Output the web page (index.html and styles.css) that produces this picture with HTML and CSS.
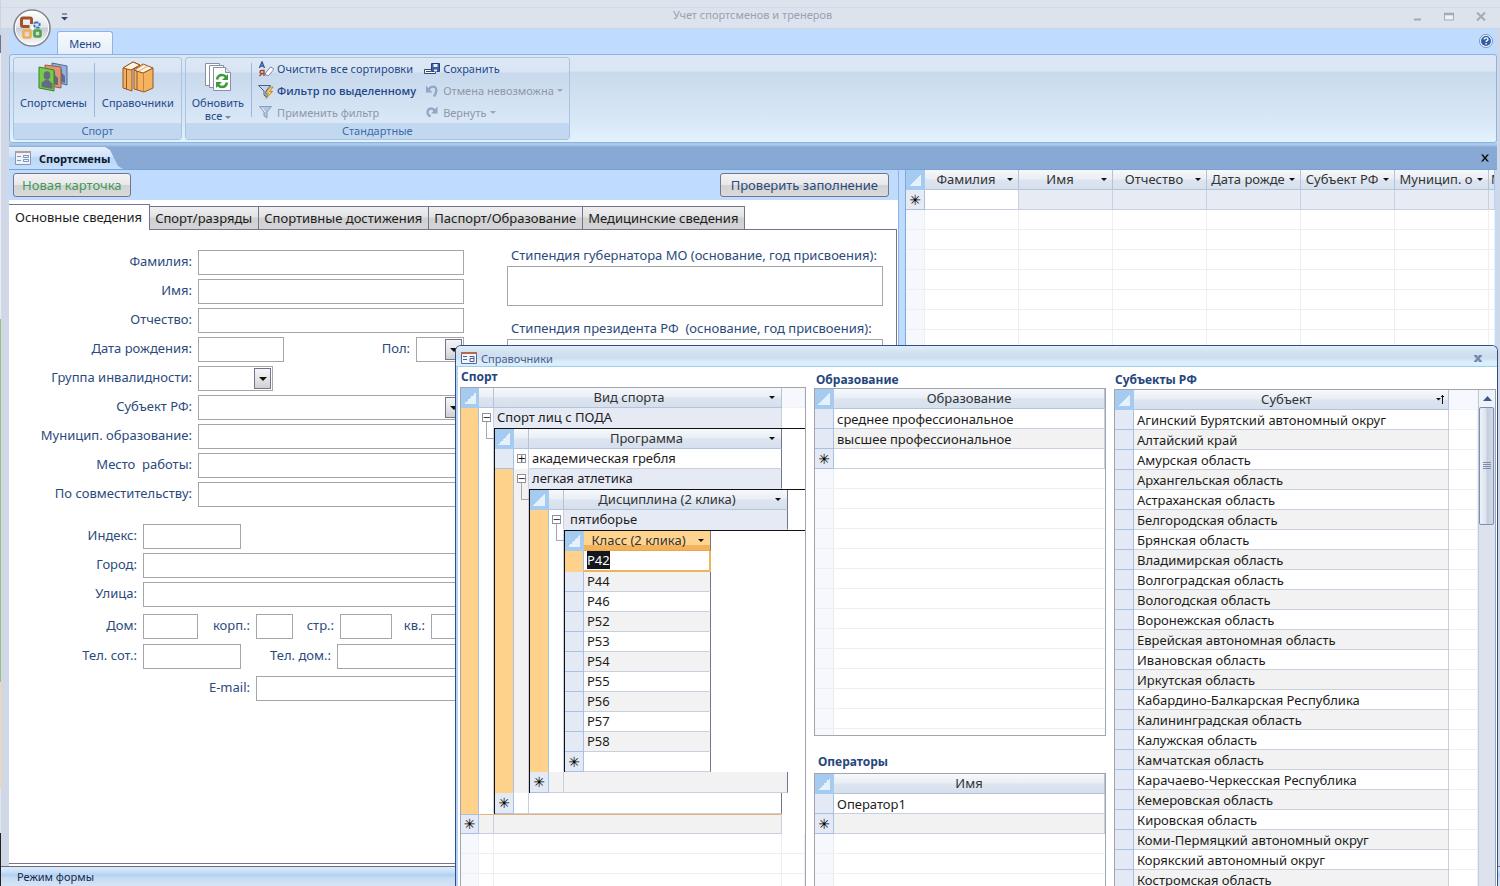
FILE: index.html
```html
<!DOCTYPE html>
<html lang="ru">
<head>
<meta charset="utf-8">
<title>Учет спортсменов и тренеров</title>
<link rel="stylesheet" href="styles.css">
</head>
<body>
<div class="app">
  <header class="titlebar">
    <button class="office" aria-label="Office">
      <svg width="38" height="38" viewBox="0 0 38 38">
        <defs><linearGradient id="orb" x1="0" y1="0" x2="0" y2="1"><stop offset="0" stop-color="#fff"/><stop offset=".48" stop-color="#e3e6ea"/><stop offset=".5" stop-color="#c6cad2"/><stop offset="1" stop-color="#fdfdfe"/></linearGradient></defs>
        <circle cx="19" cy="19" r="18" fill="url(#orb)" stroke="#83868f" stroke-width="1.6"/>
        <circle cx="19" cy="19" r="16.6" fill="none" stroke="#fff" stroke-width="1"/>
        <g fill="none">
          <path d="M16.500 17.500h-6.500q-1.500 0-1.500-1.500v-5.500q0-1.500 1.500-1.500h7q1.500 0 1.500 1.500v4.500" stroke="#a4502a" stroke-width="3"/>
          <rect x="21.500" y="13.500" width="5" height="5" rx="1" stroke="#3f73c4" stroke-width="2" stroke-dasharray="3 1"/>
          <rect x="10.500" y="21.500" width="7" height="7" rx="1" stroke="#efb04b" stroke-width="2.600"/>
          <rect x="21.500" y="21.500" width="6" height="6" rx="1" stroke="#4fa343" stroke-width="2.600"/>
        </g>
        <path d="M19.500 17v4M17.500 19h4" stroke="#fff" stroke-width="1.500"/>
      </svg>
    </button>
    <button class="qat" aria-label="Настройка панели"><svg width="7" height="8" viewBox="0 0 7 8"><path d="M1 1h5" stroke="#33476f"/><path d="M0 4h7L3.500 7.500z" fill="#33476f"/></svg></button>
    <h1 class="app-title">Учет спортсменов и тренеров</h1>
    <div class="winbtns">
      <button aria-label="Свернуть"><svg width="9" height="9" viewBox="0 0 9 9"><path d="M1 7.500h7" stroke="#a3a9b5" stroke-width="2"/></svg></button>
      <button aria-label="Развернуть"><svg width="10" height="9" viewBox="0 0 10 9"><path d="M.5 1.500h9v6.500h-9z" fill="#eef1f5" stroke="#a3a9b5"/><path d="M0 2h10" stroke="#a3a9b5" stroke-width="2.500"/></svg></button>
      <button aria-label="Закрыть"><svg width="10" height="9" viewBox="0 0 10 9"><path d="M1 .5l8 8M9 .5l-8 8" stroke="#a3a9b5" stroke-width="2"/></svg></button>
    </div>
  </header>
  <div class="frame">
    <nav class="ribbon-tabs">
      <button class="ribbon-tab">Меню</button>
      <button class="help" aria-label="Справка"><svg width="14" height="14" viewBox="0 0 14 14"><circle cx="7" cy="7" r="6.500" fill="#f3f7fc" stroke="#7d93b8"/><circle cx="7" cy="7" r="5" fill="#2c5cab"/><path d="M5.200 5.600q0-1.700 1.900-1.700t1.800 1.500q0 .9-1.100 1.400-.7.400-.7 1.200M7.100 9v1.400" fill="none" stroke="#fff" stroke-width="1.400"/></svg></button>
    </nav>
    <div class="ribbon">
      <section class="group">
        <div class="group-body">
          <button class="big">
            <svg width="32" height="32" viewBox="0 0 32 32">
              <path d="M15 2l15 3v19l-15-4z" fill="#8fb2df" stroke="#4e6a9e"/><path d="M21 8c2-2 5 0 4 4l3 3v7l-8-2z" fill="#5e7088"/>
              <path d="M8 4l16 2v21l-16-3z" fill="#dd9474" stroke="#a25a41"/><path d="M14 10c2-2 5 0 4 4l3 3v7l-8-1z" fill="#5e6a80"/>
              <path d="M2 6l15 3v21l-15-3z" fill="#79c94b" stroke="#3a8422"/><ellipse cx="10" cy="14.500" rx="3.300" ry="4.200" fill="#646c82"/><path d="M4.500 26v-4.500l4-2.500h3l4 3.500V28z" fill="#646c82"/>
            </svg><span>Спортсмены</span></button>
          <span class="vline"></span>
          <button class="big">
            <svg width="34" height="32" viewBox="0 0 34 32">
              <g stroke="#9a5520" stroke-linejoin="round"><path d="M2 7L12 1l7 3-8 5v21l-9-3z" fill="#f0b163"/><path d="M2 7L12 1l7 3-9 5z" fill="#fff4df"/><path d="M5.500 8v20" fill="none"/>
              <path d="M13 9l9 3 10-5v20l-9 4-10-3z" fill="#f3b35f"/><path d="M13 9L22 3l10 4-10 5z" fill="#fff4df"/><path d="M16 10v19" fill="none"/></g><path d="M22.500 12.500v17.500" stroke="#c98438" fill="none"/><path d="M15 8.500l8-5M18 10l8-4.500" stroke="#d7a566"/>
            </svg><span>Справочники</span></button>
        </div>
        <h2 class="group-title">Спорт</h2>
      </section>
      <section class="group">
        <div class="group-body">
          <button class="big">
            <svg width="28" height="32" viewBox="0 0 28 32">
              <g fill="#fff" stroke="#8791a3"><path d="M1.500 2.500h14v22h-14z"/><path d="M5.500 4.500h14v22h-14z"/><path d="M9.500 6.500h12l5 5v18h-17z"/><path d="M21.500 6.500v5h5" fill="#dfe5ee"/></g>
              <g fill="none" stroke="#3c9a3a" stroke-width="2.600"><path d="M13 18.500q1-4.500 5-4.500 2.500 0 4 2"/><path d="M23 21.500q-1 4.500-5 4.500-2.500 0-4-2"/></g><path d="M24 13v6h-6zM12 27v-6h6z" fill="#3c9a3a"/>
            </svg><span>Обновить<br>все <i class="caret"></i></span></button>
          <span class="vline"></span>
          <div class="cmds">
            <button class="cmd"><svg width="16" height="16" viewBox="0 0 16 16"><path d="M1.500 7L4 1l2.500 6M2.500 5h3" fill="none" stroke="#33569c" stroke-width="1.400"/><path d="M6 15V9.500H3.500a1.500 1.500 0 000 3H6M4 12.500L1.500 15" fill="none" stroke="#a2472c" stroke-width="1.400"/><path d="M7.500 12l5-6 3 1.500-.5 2-4.500 5-3-.5z" fill="#fff" stroke="#6f86b3"/></svg>Очистить все сортировки</button>
            <button class="cmd strong"><svg width="16" height="16" viewBox="0 0 16 16"><path d="M.5 2.500h12L8 8v6l-2-2V8z" fill="#c5d3e8" stroke="#4a618f"/><path d="M12.500 4L7.500 10h3L8 15.500l6.500-7h-3L15 4z" fill="#ffd75e" stroke="#a9741d" stroke-width=".8"/></svg>Фильтр по выделенному</button>
            <button class="cmd off"><svg width="16" height="16" viewBox="0 0 16 16"><path d="M1.500 2.500h12L9 8v6l-3-2V8z" fill="#b3c4de" stroke="#8b9cba"/><path d="M4 3.500L7 8" stroke="#eef3fa"/></svg>Применить фильтр</button>
          </div>
          <div class="cmds">
            <button class="cmd"><svg width="16" height="16" viewBox="0 0 16 16"><path d="M.5 8.500h11v4H.5z" fill="#fff" stroke="#33476f"/><path d="M2 10.500h5" stroke="#33476f"/><path d="M7.500 2.500h8v8h-8z" fill="#3f62a6" stroke="#263f78"/><path d="M9.500 3h4v3h-4zM10 8.500h3v2h-3z" fill="#e8eef8"/></svg>Сохранить</button>
            <button class="cmd off"><svg width="16" height="16" viewBox="0 0 16 16"><path d="M4.500 6.500Q7 3 10.500 3.800 14.500 6 10 13.500" fill="none" stroke="#92a7c8" stroke-width="2.400"/><path d="M2 2.500v7h6.500z" fill="#92a7c8"/></svg>Отмена невозможна <i class="caret"></i></button>
            <button class="cmd off"><svg width="16" height="16" viewBox="0 0 16 16"><path d="M11 6.500Q8 3 4.500 5.500 1.500 9.500 6.500 12.500" fill="none" stroke="#92a7c8" stroke-width="2.400"/><path d="M13.500 2.500v7H7z" fill="#92a7c8"/></svg>Вернуть <i class="caret"></i></button>
          </div>
        </div>
        <h2 class="group-title">Стандартные</h2>
      </section>
    </div>
    <div class="docbar">
      <div class="doctab"><svg class="formicon" width="16" height="14" viewBox="0 0 16 14"><path d="M.5.5h15v13H.5z" fill="#eef3fb" stroke="#8896b5"/><path d="M0 1h16" stroke="#b99b93" stroke-width="2"/><path d="M2 5.500h4M2 9.500h4M8.500 4.500h5v2h-5zM8.500 8.500h5v2h-5z" fill="none" stroke="#7f93bb"/></svg><span>Спортсмены</span></div>
      <button class="docclose" aria-label="Закрыть вкладку"><svg width="8" height="8" viewBox="0 0 8 8"><path d="M0 .5h2L4 3 6 .5h2L5 4l3 3.500H6L4 5 2 7.500H0L3 4z" fill="#111"/></svg></button>
    </div>
    <main class="work">
      <section class="form">
        <div class="form-head"><button class="btn new">Новая карточка</button><button class="btn">Проверить заполнение</button></div>
        <div class="tabs">
          <button class="tab active">Основные сведения</button><button class="tab">Спорт/разряды</button><button class="tab">Спортивные достижения</button><button class="tab">Паспорт/Образование</button><button class="tab">Медицинские сведения</button><span class="tabs-rest"></span>
        </div>
        <div class="form-body">
          <div class="fields">
            <div class="rows">
              <div class="row"><label for="f1">Фамилия:</label><input id="f1" class="grow"></div>
              <div class="row"><label for="f2">Имя:</label><input id="f2" class="grow"></div>
              <div class="row"><label for="f3">Отчество:</label><input id="f3" class="grow"></div>
              <div class="row"><label for="f4">Дата рождения:</label><input id="f4" class="w86"><label for="f5" class="push">Пол:</label><span class="combo w48"><select id="f5"><option></option></select><i></i></span></div>
              <div class="row"><label for="f6">Группа инвалидности:</label><span class="combo w75"><select id="f6"><option></option></select><i></i></span></div>
              <div class="row"><label for="f7">Субъект РФ:</label><span class="combo grow"><select id="f7"><option></option></select><i></i></span></div>
              <div class="row"><label for="f8">Муницип. образование:</label><input id="f8" class="grow"></div>
              <div class="row"><label for="f9">Место&nbsp; работы:</label><input id="f9" class="grow"></div>
              <div class="row"><label for="f10">По совместительству:</label><input id="f10" class="grow"></div>
            </div>
            <div class="rows addr">
              <div class="row"><label for="a1">Индекс:</label><input id="a1" class="w98"></div>
              <div class="row"><label for="a2">Город:</label><input id="a2" class="grow"></div>
              <div class="row"><label for="a3">Улица:</label><input id="a3" class="grow"></div>
            </div>
            <div class="rows addr house">
              <div class="row"><label for="a4">Дом:</label><input id="a4" class="w55"><label for="a5" class="w52">корп.:</label><input id="a5" class="w37"><label for="a6" class="w41">стр.:</label><input id="a6" class="w52"><label for="a7" class="w33">кв.:</label><input id="a7" class="grow"></div>
              <div class="row"><label for="a8">Тел. сот.:</label><input id="a8" class="w98"><label for="a9" class="w90">Тел. дом.:</label><input id="a9" class="grow"></div>
            </div>
            <div class="rows mail"><div class="row"><label for="a10">E-mail:</label><input id="a10" class="grow"></div></div>
          </div>
          <div class="grants">
            <label for="g1">Стипендия губернатора МО (основание, год присвоения):</label><textarea id="g1"></textarea>
            <label for="g2">Стипендия президента РФ&nbsp; (основание, год присвоения):</label><textarea id="g2"></textarea>
          </div>
        </div>
      </section>
      <section class="sheet">
        <table class="grid people">
          <colgroup><col class="c-sel"><col class="c94"><col class="c94"><col class="c94"><col class="c94"><col class="c94"><col class="c94"><col></colgroup>
          <thead><tr><th class="corner"></th><th><span class="hd drop">Фамилия</span></th><th><span class="hd drop">Имя</span></th><th><span class="hd drop">Отчество</span></th><th><span class="hd drop">Дата рожде</span></th><th><span class="hd drop">Субъект РФ</span></th><th><span class="hd drop">Муницип. о</span></th><th class="cut">М</th></tr></thead>
          <tbody>
            <tr class="newrow"><td class="sel">✳</td><td class="current"></td><td></td><td></td><td></td><td></td><td></td><td></td></tr>
            <tr class="empty"><td></td><td></td><td></td><td></td><td></td><td></td><td></td><td></td></tr>
            <tr class="empty"><td></td><td></td><td></td><td></td><td></td><td></td><td></td><td></td></tr>
            <tr class="empty"><td></td><td></td><td></td><td></td><td></td><td></td><td></td><td></td></tr>
            <tr class="empty"><td></td><td></td><td></td><td></td><td></td><td></td><td></td><td></td></tr>
            <tr class="empty"><td></td><td></td><td></td><td></td><td></td><td></td><td></td><td></td></tr>
            <tr class="empty"><td></td><td></td><td></td><td></td><td></td><td></td><td></td><td></td></tr>
            <tr class="empty"><td></td><td></td><td></td><td></td><td></td><td></td><td></td><td></td></tr>
          </tbody>
        </table>
      </section>
    </main>
  </div>
  <footer class="status">Режим формы</footer>

  <section class="window">
    <header class="window-head">
      <svg width="16" height="12" viewBox="0 0 16 12"><path d="M.5.500h15v11H.5z" fill="#f2f4fb" stroke="#58689a"/><path d="M0 1h16" stroke="#b8674f" stroke-width="2"/><path d="M2 4.500h4M2 7.500h4M8.500 4.500h4.500v5M13 6.500H9v3h4" fill="none" stroke="#4b5f96"/></svg>
      <span>Справочники</span>
      <button aria-label="Закрыть окно"><svg width="8" height="7" viewBox="0 0 8 7"><path d="M0 0h3l1 2 1-2h3v1L5.500 3.500 8 6v1H5L4 5 3 7H0V6l2.500-2.500L0 1z" fill="#7488ac"/></svg></button>
    </header>
    <div class="window-body">
      <div class="pane sport">
        <h3>Спорт</h3>
        <div class="box lined">
          <table class="grid tree root">
            <colgroup><col class="c-sel"><col class="c-exp"><col class="c288"><col></colgroup>
            <tr><th class="corner"></th><th></th><th><span class="hd drop">Вид спорта</span></th><th class="sparehead"></th></tr>
            <tr><td class="sel on"></td><td class="exp"><button class="pm open" aria-label="Свернуть">−</button></td><td class="alt">Спорт лиц с ПОДА</td><td class="spare"></td></tr>
            <tr><td class="sel on"></td><td class="exp"></td><td class="nest" colspan="2">
              <table class="grid tree sub">
                <colgroup><col class="c-sel"><col class="c-exp"><col class="c253"><col></colgroup>
                <tr><th class="corner"></th><th></th><th class="edge"><span class="hd drop">Программа</span></th><td class="spare"></td></tr>
                <tr><td class="sel"></td><td class="exp"><button class="pm" aria-label="Развернуть">+</button></td><td class="edge">академическая гребля</td><td class="spare"></td></tr>
                <tr><td class="sel on"></td><td class="exp grey"><button class="pm open" aria-label="Свернуть">−</button></td><td class="alt edge">легкая атлетика</td><td class="spare"></td></tr>
                <tr><td class="sel on"></td><td class="exp grey"></td><td class="nest" colspan="2">
                  <table class="grid tree sub">
                    <colgroup><col class="c-sel"><col class="c-exp"><col class="c224"><col></colgroup>
                    <tr><th class="corner"></th><th></th><th class="edge"><span class="hd drop">Дисциплина (2 клика)</span></th><td class="spare"></td></tr>
                    <tr><td class="sel on"></td><td class="exp"><button class="pm open" aria-label="Свернуть">−</button></td><td class="alt edge wide">пятиборье</td><td class="spare"></td></tr>
                    <tr><td class="sel on"></td><td class="exp"></td><td class="nest" colspan="2">
                      <table class="grid tree sub leaf">
                        <colgroup><col class="c-sel"><col class="c127"><col></colgroup>
                        <tr><th class="corner"></th><th class="edge hot"><span class="hd drop">Класс (2 клика)</span></th><td class="spare"></td></tr>
                        <tr><td class="sel on"></td><td class="active-cell"><mark>P42</mark></td><td class="spare"></td></tr>
                        <tr><td class="sel"></td><td class="edge">P44</td><td class="spare"></td></tr>
                        <tr><td class="sel"></td><td class="edge">P46</td><td class="spare"></td></tr>
                        <tr><td class="sel"></td><td class="edge">P52</td><td class="spare"></td></tr>
                        <tr><td class="sel"></td><td class="edge">P53</td><td class="spare"></td></tr>
                        <tr><td class="sel"></td><td class="edge">P54</td><td class="spare"></td></tr>
                        <tr><td class="sel"></td><td class="edge">P55</td><td class="spare"></td></tr>
                        <tr><td class="sel"></td><td class="edge">P56</td><td class="spare"></td></tr>
                        <tr><td class="sel"></td><td class="edge">P57</td><td class="spare"></td></tr>
                        <tr><td class="sel"></td><td class="edge">P58</td><td class="spare"></td></tr>
                        <tr><td class="sel">✳</td><td class="edge"></td><td class="spare"></td></tr>
                      </table></td></tr>
                    <tr class="last"><td class="sel">✳</td><td class="grey"></td><td class="grey edge"></td><td class="spare"></td></tr>
                  </table></td></tr>
                <tr class="last"><td class="sel">✳</td><td></td><td class="edge"></td><td class="spare"></td></tr>
              </table></td></tr>
            <tr class="rootnew"><td class="sel">✳</td><td class="grey"></td><td class="grey"></td><td class="spare"></td></tr>
            <tr class="empty"><td></td><td></td><td></td><td></td></tr>
            <tr class="empty"><td></td><td></td><td></td><td></td></tr>
            <tr class="empty"><td></td><td></td><td></td><td></td></tr>
          </table>
        </div>
      </div>
      <div class="pane middle">
        <h3>Образование</h3>
        <div class="box lined edu">
          <table class="grid plain">
            <colgroup><col class="c-sel"><col></colgroup>
            <tr><th class="corner"></th><th>Образование</th></tr>
            <tr><td class="sel"></td><td>среднее профессиональное</td></tr>
            <tr><td class="sel"></td><td>высшее профессиональное</td></tr>
            <tr><td class="sel">✳</td><td></td></tr>
          </table>
        </div>
        <h3 class="ops">Операторы</h3>
        <div class="box lined fill">
          <table class="grid plain">
            <colgroup><col class="c-sel"><col></colgroup>
            <tr><th class="corner"></th><th>Имя</th></tr>
            <tr><td class="sel"></td><td>Оператор1</td></tr>
            <tr><td class="sel">✳</td><td class="grey"></td></tr>
          </table>
        </div>
      </div>
      <div class="pane subjects">
        <h3>Субъекты РФ</h3>
        <div class="box scrollbox">
          <table class="grid plain">
            <colgroup><col class="c-sel"><col><col class="c29"></colgroup>
            <tr><th class="corner"></th><th><span class="hd sort">Субъект<svg width="9" height="9" viewBox="0 0 9 9"><path d="M0 3h5L2.500 5.500z" fill="#111"/><path d="M6.500 0v9M5 2l1.500-1.500L8 2" fill="none" stroke="#111"/></svg></span></th><th class="sparehead"></th></tr>
            <tr><td class="sel"></td><td>Агинский Бурятский автономный округ</td><td class="thin"></td></tr>
            <tr><td class="sel"></td><td>Алтайский край</td><td class="thin"></td></tr>
            <tr><td class="sel"></td><td>Амурская область</td><td class="thin"></td></tr>
            <tr><td class="sel"></td><td>Архангельская область</td><td class="thin"></td></tr>
            <tr><td class="sel"></td><td>Астраханская область</td><td class="thin"></td></tr>
            <tr><td class="sel"></td><td>Белгородская область</td><td class="thin"></td></tr>
            <tr><td class="sel"></td><td>Брянская область</td><td class="thin"></td></tr>
            <tr><td class="sel"></td><td>Владимирская область</td><td class="thin"></td></tr>
            <tr><td class="sel"></td><td>Волгоградская область</td><td class="thin"></td></tr>
            <tr><td class="sel"></td><td>Вологодская область</td><td class="thin"></td></tr>
            <tr><td class="sel"></td><td>Воронежская область</td><td class="thin"></td></tr>
            <tr><td class="sel"></td><td>Еврейская автономная область</td><td class="thin"></td></tr>
            <tr><td class="sel"></td><td>Ивановская область</td><td class="thin"></td></tr>
            <tr><td class="sel"></td><td>Иркутская область</td><td class="thin"></td></tr>
            <tr><td class="sel"></td><td>Кабардино-Балкарская Республика</td><td class="thin"></td></tr>
            <tr><td class="sel"></td><td>Калининградская область</td><td class="thin"></td></tr>
            <tr><td class="sel"></td><td>Калужская область</td><td class="thin"></td></tr>
            <tr><td class="sel"></td><td>Камчатская область</td><td class="thin"></td></tr>
            <tr><td class="sel"></td><td>Карачаево-Черкесская Республика</td><td class="thin"></td></tr>
            <tr><td class="sel"></td><td>Кемеровская область</td><td class="thin"></td></tr>
            <tr><td class="sel"></td><td>Кировская область</td><td class="thin"></td></tr>
            <tr><td class="sel"></td><td>Коми-Пермяцкий автономный округ</td><td class="thin"></td></tr>
            <tr><td class="sel"></td><td>Корякский автономный округ</td><td class="thin"></td></tr>
            <tr><td class="sel"></td><td>Костромская область</td><td class="thin"></td></tr>
          </table>
          <div class="scroll"><button class="up" aria-label="Вверх"><svg width="9" height="5" viewBox="0 0 9 5"><path d="M0 5h9L4.500 0z" fill="#3c5a96"/></svg></button><div class="thumb"><svg width="8" height="8" viewBox="0 0 8 8"><path d="M0 .5h8M0 2.500h8M0 4.500h8M0 6.500h8" stroke="#7e8cab"/></svg></div></div>
        </div>
      </div>
    </div>
  </section>
</div>
</body>
</html>
```
FILE: styles.css
```css
* { box-sizing: border-box; }
body {
  margin: 0;
  font-family: "Noto Sans", "Open Sans", sans-serif;
  font-size: 13px;
  color: #1c1c1c;
}
button, input, select, textarea { font: inherit; color: inherit; margin: 0; }
button { background: none; border: 0; padding: 0; }
h1, h2, h3 { margin: 0; font-weight: normal; }

.app {
  position: relative;
  display: flex;
  flex-direction: column;
  height: 100vh;
  overflow: hidden;
  padding-left: 1px;
  background:
    linear-gradient(#c9d3e2 0 4%, #6d7686 4% 6%, #e8edf5 6% 36%, #9cc07a 36% 77%, #f4d9a4 77% 89%, #dfe7f2 89% 94%, #222 94%) 0 0 / 1px 100% no-repeat,
    #d0d8e7;
}

/* title bar */
.titlebar {
  display: flex;
  align-items: flex-start;
  height: 29px;
  flex: none;
  padding: 9px 14px 0 12px;
  background: linear-gradient(#dde3ed 0 7px, #d3dbe7 7px 8px, #dde3ed 8px);
  border-bottom: 1px solid #c9d4e4;
  font-size: 11px;
}
.office { position: relative; z-index: 2; width: 38px; height: 38px; flex: none; }
.office svg, .winbtns svg, .help svg { display: block; }
.qat { margin: 4px 0 0 10px; line-height: 0; }
.app-title { flex: 1; text-align: center; font-size: 11px; line-height: 12px; color: #98a2b3; padding-left: 24px; }
.winbtns { display: flex; gap: 22px; padding: 3px 0 0; }

/* ribbon */
.frame { flex: 1; min-height: 0; display: flex; flex-direction: column; margin: 0 3px 0 8px; }
.ribbon-tabs {
  display: flex;
  height: 25px;
  flex: none;
  align-items: flex-end;
  justify-content: space-between;
  padding: 0 4px 0 48px;
  background: #bfdbfd;
}
.ribbon-tab {
  width: 56px;
  height: 23px;
  font-size: 11px;
  color: #22488a;
  background: linear-gradient(#f6fafe, #e6eef8);
  border: 1px solid #8fb4e4;
  border-bottom: 0;
  border-radius: 3px 3px 0 0;
}
.help { margin-bottom: 6px; }
.ribbon {
  display: flex;
  gap: 3px;
  flex: none;
  height: 89px;
  padding: 2px 3px;
  border: 1px solid #8db2e3;
  border-radius: 3px;
  background: linear-gradient(#dbe7f5 0, #dbe7f5 16px, #c9daed 17px, #d9e9f8 70px, #e3f4fd 88px);
}
.group {
  display: flex;
  flex-direction: column;
  border: 1px solid #a9c3e2;
  border-radius: 3px;
  background: linear-gradient(#dde8f5 0, #d9e5f3 14px, #c8d9ed 15px, #dae8f7 66px);
}
.group-body { display: flex; flex: 1; min-height: 0; padding: 0 6px 0 5px; }
.group-title {
  height: 16px;
  flex: none;
  font-size: 11px;
  line-height: 15px;
  text-align: center;
  color: #3e6aaa;
  background: #c2d8f0;
}
.big {
  display: flex;
  flex-direction: column;
  align-items: center;
  gap: 3px;
  padding: 3px 1px 0;
  font-size: 11px;
  line-height: 13px;
  color: #22488a;
}
.big span { white-space: nowrap; }
.big svg { height: 32px; }
.vline { width: 1px; margin: 5px 6px 6px; background: #9ab7dc; flex: none; }
.cmds { display: flex; flex-direction: column; }
.cmd {
  display: flex;
  align-items: center;
  gap: 3px;
  height: 22px;
  padding-right: 8px;
  font-size: 11px;
  color: #22488a;
  white-space: nowrap;
}
.cmds:last-child .cmd { padding-right: 0; }
.cmd.strong { font-family: "Open Sans", "Noto Sans", sans-serif; font-weight: 600; }
.cmd.off { color: #8d98a8; }
.caret {
  display: inline-block;
  border: 3px solid transparent;
  border-top-color: #7b88a0;
  border-bottom: 0;
  vertical-align: middle;
}
.off .caret { border-top-color: #9aa6b8; }

/* document tabs */
.docbar {
  display: flex;
  justify-content: space-between;
  align-items: stretch;
  flex: none;
  height: 27px;
  padding: 4px 8px 0 0;
  background: linear-gradient(#a9c8ea 0, #a9c8ea 2px, #87a9d4 4px);
  border-bottom: 1px solid #74a3dc;
}
.doctab {
  display: flex;
  align-items: center;
  gap: 8px;
  width: 114px;
  padding-left: 6px;
  font-size: 11px;
  font-weight: bold;
  color: #101828;
  background: linear-gradient(#e4effc 0, #d2e5fb 9px, #b9d8f8 11px, #c6defb);
  clip-path: polygon(0 0, 96px 0, 101px 3px, 109px 19px, 114px 100%, 0 100%);
}
.docclose { line-height: 0; }

/* form */
.work {
  display: grid;
  grid-template-columns: 890fr 592fr;
  gap: 6px;
  flex: 1;
  min-height: 0;
  overflow: hidden;
  background: #bfdbfd;
}
.form { display: flex; flex-direction: column; background: #fff; border-right: 1px solid #8fb4e4; min-height: 0; }
.form-head {
  display: flex;
  justify-content: space-between;
  align-items: flex-start;
  height: 30px;
  flex: none;
  padding: 3px 9px 0 4px;
  background: #bfdbfd;
}
.btn {
  height: 24px;
  padding: 0 10px;
  line-height: 20px;
  border: 1px solid #74758d;
  border-radius: 3px;
  background: linear-gradient(#f3f3f5 0, #e8e8ea 50%, #d2d3d4 52%, #dadada);
  color: #2b4a7c;
}
.btn.new { color: #3f9a58; padding: 0 8px; }
.tabs { display: flex; align-items: flex-end; height: 30px; flex: none; margin-right: 1px; }
.tab {
  height: 24px;
  padding: 0 6px 0 5px;
  line-height: 20px;
  white-space: nowrap;
  border: 1px solid #74758d;
  border-left-width: 0;
  background: linear-gradient(#efeff1 0, #e2e3e4 45%, #cfd0d1 50%, #d4d4d4);
}
.tab.active { height: 26px; padding: 0 7px 2px 6px; background: #fff; border-bottom: 0; }
.tabs-rest { flex: 1; border-bottom: 1px solid #74758d; }
.form-body {
  flex: 1;
  min-height: 0;
  display: flex;
  justify-content: space-between;
  padding: 20px 13px 0 0;
  margin: 0 1px 2px 0;
  border: 1px solid #74758d;
  border-width: 0 1px 1px 0;
  color: #2b4a7c;
}
.fields { width: 455px; }
.rows { display: flex; flex-direction: column; gap: 4px; --label: 183px; }
.row { display: flex; gap: 6px; height: 25px; }
.row label { flex: none; text-align: right; line-height: 22px; white-space: nowrap; }
.row label:first-child { width: var(--label); }
.row label.push { margin-left: auto; }
.rows.addr { --label: 128px; margin-top: 17px; }
.rows.house { margin-top: 7px; gap: 5px; }
.rows.mail { --label: 241px; margin-top: 7px; }
input, select, textarea { border: 1px solid #a5a6ab; border-radius: 0; background: #fff; padding: 0 3px; min-width: 0; }
.grow { flex: 1; }
.w33 { width: 27px; }
.w37 { width: 37px; }
.w41 { width: 35px; }
.w48 { width: 48px; }
.w52 { width: 52px; }
label.w52 { width: 46px; }
.w55 { width: 55px; }
.w75 { width: 75px; }
.w86 { width: 86px; }
.w90 { width: 84px; }
.w98 { width: 98px; }
.combo { position: relative; display: flex; }
.combo select { appearance: none; width: 100%; }
.combo i {
  position: absolute;
  top: 2px;
  right: 2px;
  width: 17px;
  height: 21px;
  display: flex;
  align-items: center;
  justify-content: center;
  border: 1px solid #74758d;
  background: linear-gradient(#f5f5f6, #e6e6e8 50%, #cfd0d2);
  pointer-events: none;
}
.combo i::after { content: ""; border: 4px solid transparent; border-top-color: #111; border-bottom: 0; }
.grants { display: flex; flex-direction: column; width: 376px; margin-top: -5px; }
.grants label { padding-left: 4px; line-height: 20px; height: 21px; white-space: nowrap; }
.grants textarea { height: 40px; resize: none; margin-bottom: 12px; }

/* datasheets */
.sheet { background: #fff; overflow: hidden; border-left: 1px solid #7fa9dc; margin-right: 2px; }
.grid { border-collapse: separate; border-spacing: 0; table-layout: fixed; width: 100%; }
.grid th, .grid td {
  height: 20px;
  padding: 0 3px;
  line-height: 19px;
  border-right: 1px solid #c9cfde;
  border-bottom: 1px solid #c9cfde;
  overflow: hidden;
  white-space: nowrap;
  text-align: left;
}
.grid th {
  font-weight: normal;
  text-align: center;
  color: #333;
  border-color: #b5c3d8;
  background: linear-gradient(#f6f8fb 0, #eaeff6 45%, #dce4ef 55%, #d6e0ee);
}
.c-sel { width: 19px; }
.root > colgroup > .c-sel { width: 18px; }
.c-exp { width: 15px; }
.c29 { width: 29px; }
.c94 { width: 94px; }
.c127 { width: 127px; }
.c224 { width: 224px; }
.c253 { width: 253px; }
.c288 { width: 288px; }
.grid th.corner {
  background: linear-gradient(135deg, transparent 0 50%, #e6f1fb 50%) 3px 4px / 12px 12px no-repeat, #a5cbf0;
  border-color: #a5cbf0;
}
.hd { display: flex; align-items: center; justify-content: center; width: 100%; height: 19px; }
.hd.drop::after {
  content: "";
  flex: none;
  width: 14px;
  height: 3px;
  margin: 0 3px 0 auto;
  background: #111;
  clip-path: polygon(8px 0, 14px 0, 11px 3px);
}
.hd.drop::before { content: ""; margin-right: auto; }
.hd.sort::before { content: ""; margin-right: auto; }
.hd.sort svg { margin-left: auto; }
.grid td.sel {
  padding: 0;
  text-align: center;
  font: 14px/18px "DejaVu Sans", sans-serif;
  background: #e4eaf5;
  border-color: #a9c1e0;
  color: #000;
}
.grid td.sel.on { background: #ffd28b; border-bottom-color: #ffd28b; }
.people th { padding: 0 2px; }
.people .hd.drop::after { width: 8px; clip-path: polygon(2px 0, 8px 0, 5px 3px); }
.people .cut { padding: 0 2px; text-align: left; }
.people .newrow td { background: #e7ebf4; }
.people .newrow td.current { background: #fff; }
.grid .empty td { border-color: #edeff3; }
.grid .empty td:first-child { background: #f6f8fd; }
.grid .grey, .plain tr:nth-child(odd) td { background: #f2f2f2; }
.grid .alt { background: #e6eaf4; border-bottom-color: #e6eaf4; }
.plain tr td.sel { background: #e4eaf5; }
.plain td:not(.sel) { padding-top: 2px; line-height: 17px; }
.plain tr:nth-child(even) td:not(.sel) { background: #fff; }

/* dialog window */
.window {
  position: absolute;
  left: 455px;
  right: 2px;
  top: 345px;
  bottom: 0;
  display: flex;
  flex-direction: column;
  overflow: hidden;
  background: #fff;
  border: 1px solid #2e4f8a;
  border-bottom: 0;
  border-radius: 6px 6px 0 0;
}
.window-head {
  display: flex;
  align-items: center;
  gap: 4px;
  height: 21px;
  flex: none;
  padding: 4px 15px 0 5px;
  font-size: 11px;
  color: #47618f;
  background: linear-gradient(#e0eefa 0, #d3e2f2 6px, #cdddef 12px, #dceefb 16px, #d8eefb);
  border-bottom: 1px solid #a3cdec;
}
.window-head button { margin-left: auto; line-height: 0; }
.window-body {
  flex: 1;
  min-height: 0;
  display: grid;
  grid-template-columns: 346fr 292fr 382fr;
  gap: 8px;
  padding: 0 1px 0 2px;
  border-left: 2px solid #b4d3f5;
}
.pane { display: flex; flex-direction: column; min-width: 0; min-height: 0; }
.pane h3 { font-size: 12px; font-weight: bold; color: #25467c; line-height: 18px; height: 22px; padding: 4px 1px 0; flex: none; }
.sport h3 { height: 20px; padding-top: 1px; }
.middle h3 { padding-left: 2px; height: 21px; }
.middle h3.ops { padding: 17px 4px 0; height: 37px; }
.box { border: 1px solid #a2a5ad; border-bottom: 0; overflow: hidden; background: #fff; flex: 1; min-height: 0; }
.lined.edu, .lined.fill {
  background:
    linear-gradient(90deg, #f6f8fd 18px, #e6eaf1 18px, #e6eaf1 19px, transparent 19px),
    #fff;
}
.lined.edu::after, .lined.fill::after {
  content: "";
  display: block;
  height: 100%;
  background: repeating-linear-gradient(transparent 0 19px, #edeff3 19px 20px);
}
.box.edu { flex: none; height: 348px; border-bottom: 1px solid #a2a5ad; }
.scrollbox { display: flex; align-items: flex-start; }
.scrollbox .grid { flex: 1; }
.grid .sparehead { background: #f6f8fd; border-color: #f0f2f7; }
.grid .thin { border-color: #edeff3; }
.plain tr td.thin:not(.sel) { background: #fff; }
.scroll { width: 17px; align-self: stretch; flex: none; background: #dce3ee; border-left: 1px solid #c1cadb; }
.scroll .up { display: flex; width: 100%; height: 17px; align-items: center; justify-content: center; background: #eef2f9; }
.thumb {
  display: flex;
  align-items: center;
  justify-content: center;
  height: 118px;
  margin: 0 1px 0 0;
  border: 1px solid #7f8fb0;
  border-radius: 2px;
  background: linear-gradient(90deg, #eef1f7, #dde3ed 45%, #c3cddf 55%, #d2dae8);
}

/* nested datasheets */
.grid td.exp { padding: 0; border-bottom-color: transparent; overflow: visible; }
.grid td.nest { padding: 0; border: 0; height: auto; overflow: visible; }
.grid td.spare { border: 0; background: none; padding: 0; }
.sub { border: 1px solid #111; border-width: 1px 0 0 1px; }
.grid .edge { border-right-color: #74758d; }
.tree .alt.wide { text-indent: 3px; }
.leaf tr:nth-child(odd) td.edge { background: #f2f2f2; }
.leaf tr:last-child td.edge { background: #fff; }
.leaf th.hot { background: linear-gradient(#ffd48f 0 14px, #f3b35c 14px); border-bottom-color: #e9a64c; }
.grid td.active-cell { border: 2px solid #eeb35f; border-width: 0 2px 2px 0; }
mark { display: inline-block; height: 18px; line-height: 19px; background: #15151d; color: #fff; }
.sub .last td { height: 21px; }
.rootnew td { border-top: 1px solid #e5b377; }
.grid .rootnew td { line-height: 18px; }
.grid .rootnew td.sel { border-top-color: #a9c1e0; }
.grid .rootnew td.spare { border-top: 0; }
.pm {
  position: relative;
  display: block;
  width: 9px;
  height: 9px;
  margin: 0 auto;
  border: 1px solid #8f929b;
  background: #fff;
  color: #111;
  font: 10px/7px "DejaVu Sans", sans-serif;
}
.pm.open::after {
  content: "";
  position: absolute;
  z-index: 1;
  left: 3px;
  top: 8px;
  width: 7px;
  height: 16px;
  border: 1px solid #a6a8ae;
  border-width: 0 0 1px 1px;
}

/* status bar */
.status {
  flex: none;
  height: 20px;
  padding: 0 16px;
  font-size: 11px;
  line-height: 19px;
  color: #15294d;
  border-top: 1px solid #6a6b82;
  background: linear-gradient(#dcebfb 0, #c9dff7 5px, #b0d0f2 8px, #c7dcf3 11px, #d4e4f6);
}
```
